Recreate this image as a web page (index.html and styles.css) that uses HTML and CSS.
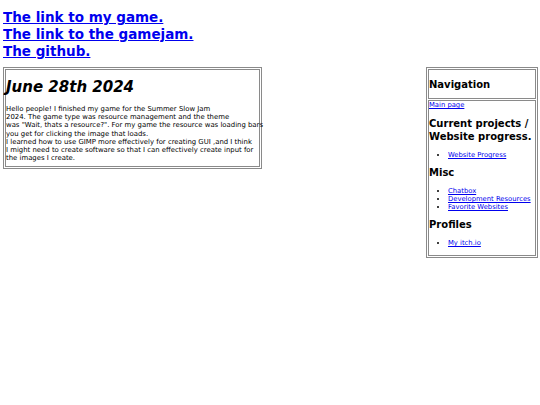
FILE: index.html
```html
<!DOCTYPE html>
<html>
<head>
<meta charset="utf-8">
<link rel="stylesheet" href="styles.css">
</head>
<body>
<div class="links">
  <a href="#">The link to my game.</a><br>
  <a href="#">The link to the gamejam.</a><br>
  <a href="#">The github.</a>
</div>
<div class="row">
  <div class="post">
    <h1 class="post-title">June 28th 2024</h1>
    <p class="post-text">Hello people! I finished my game for the Summer Slow Jam<br>2024. The game type was resource management and the theme<br>was "Wait, thats a resource?". For my game the resource was loading bars<br>you get for clicking the image that loads.<br>I learned how to use GIMP more effectively for creating GUI ,and I think<br>I might need to create software so that I can effectively create input for<br>the images I create.</p>
  </div>
  <div class="nav">
    <div class="nav-title"><h2 class="nav-h">Navigation</h2></div>
    <div class="nav-body">
      <a class="small-link" href="#">Main page</a>
      <h2 class="nav-h">Current projects / Website progress.</h2>
      <ul class="nav-list">
        <li><a href="#">Website Progress</a></li>
      </ul>
      <h2 class="nav-h">Misc</h2>
      <ul class="nav-list">
        <li><a href="#">Chatbox</a></li>
        <li><a href="#">Development Resources</a></li>
        <li><a href="#">Favorite Websites</a></li>
      </ul>
      <h2 class="nav-h">Profiles</h2>
      <ul class="nav-list">
        <li><a href="#">My itch.io</a></li>
      </ul>
    </div>
  </div>
</div>
</body>
</html>
```

FILE: styles.css
```css
html, body {
  background: #ffffff;
}
body {
  margin: 4px 2px 4px 3px;
  font-family: "DejaVu Sans", Verdana, sans-serif;
  color: #000;
}
a {
  color: #0000ee;
}
.links {
  margin-top: 5px;
  font-size: 13.5px;
  font-weight: bold;
  line-height: 17px;
}
.row {
  display: flex;
  justify-content: space-between;
  align-items: flex-start;
  margin-top: 7px;
}
.post {
  width: 253px;
  border: 3px double #8a8a8a;
  padding: 0 0 4px 0;
}
.post-title {
  margin: 8px 0 9px 0;
  font-size: 15px;
  font-style: italic;
  font-weight: bold;
  line-height: 18px;
}
.post-text {
  margin: 0;
  font-size: 6.9px;
  line-height: 8.2px;
  white-space: nowrap;
}
.nav {
  width: 108px;
  border: 1px solid #8a8a8a;
  padding: 1px;
  display: flex;
  flex-direction: column;
  gap: 1px;
}
.nav-title {
  border: 1px solid #8a8a8a;
  height: 28px;
  display: flex;
  align-items: center;
}
.nav-h {
  margin: 0;
  font-size: 10px;
  font-weight: bold;
  line-height: 13px;
}
.nav-body {
  border: 1px solid #8a8a8a;
  padding: 0 0 8px 0;
  font-size: 6.8px;
  line-height: 8px;
}
.nav-body .nav-h {
  margin: 8px 0 8px 0;
}
.nav-body .nav-list + .nav-h {
  margin-top: 7px;
}
.small-link {
  display: block;
}
.nav-list {
  margin: 0;
  padding-left: 19px;
}
.nav-list li {
  line-height: 8px;
}
```
